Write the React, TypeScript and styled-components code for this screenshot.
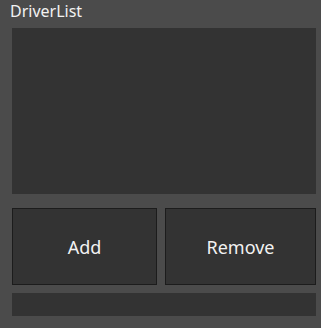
import React from 'react';
import styled, { createGlobalStyle } from 'styled-components';

const GlobalStyle = createGlobalStyle`
  html, body {
    margin: 0;
    padding: 0;
    background: #4b4b4b;
  }
  * {
    box-sizing: border-box;
  }
`;

const Panel = styled.div`
  width: 321px;
  height: 328px;
  background: #4b4b4b;
  display: flex;
  flex-direction: column;
  font-family: 'Noto Sans', 'Liberation Sans', sans-serif;
  color: #f2f2f2;
`;

const Title = styled.div`
  height: 28px;
  padding-left: 10px;
  font-size: 16px;
  line-height: 22px;
`;

const Body = styled.div`
  display: flex;
  flex-direction: column;
  padding: 0 5px 0 12px;
`;

const ListBox = styled.div`
  height: 166px;
  background: #333333;
`;

const ButtonRow = styled.div`
  display: grid;
  grid-template-columns: 145px 1fr;
  gap: 8px;
  margin-top: 14px;
`;

const Button = styled.button`
  height: 77px;
  background: #333333;
  border: 1px solid #1c1c1c;
  color: #f2f2f2;
  font-family: 'Noto Sans', 'Liberation Sans', sans-serif;
  font-size: 18px;
  padding: 0;
  cursor: pointer;
`;

const StatusBar = styled.div`
  height: 23px;
  margin-top: 8px;
  background: #333333;
`;

export default function App() {
  return (
    <>
      <GlobalStyle />
      <Panel>
        <Title>DriverList</Title>
        <Body>
          <ListBox />
          <ButtonRow>
            <Button>Add</Button>
            <Button>Remove</Button>
          </ButtonRow>
          <StatusBar />
        </Body>
      </Panel>
    </>
  );
}
